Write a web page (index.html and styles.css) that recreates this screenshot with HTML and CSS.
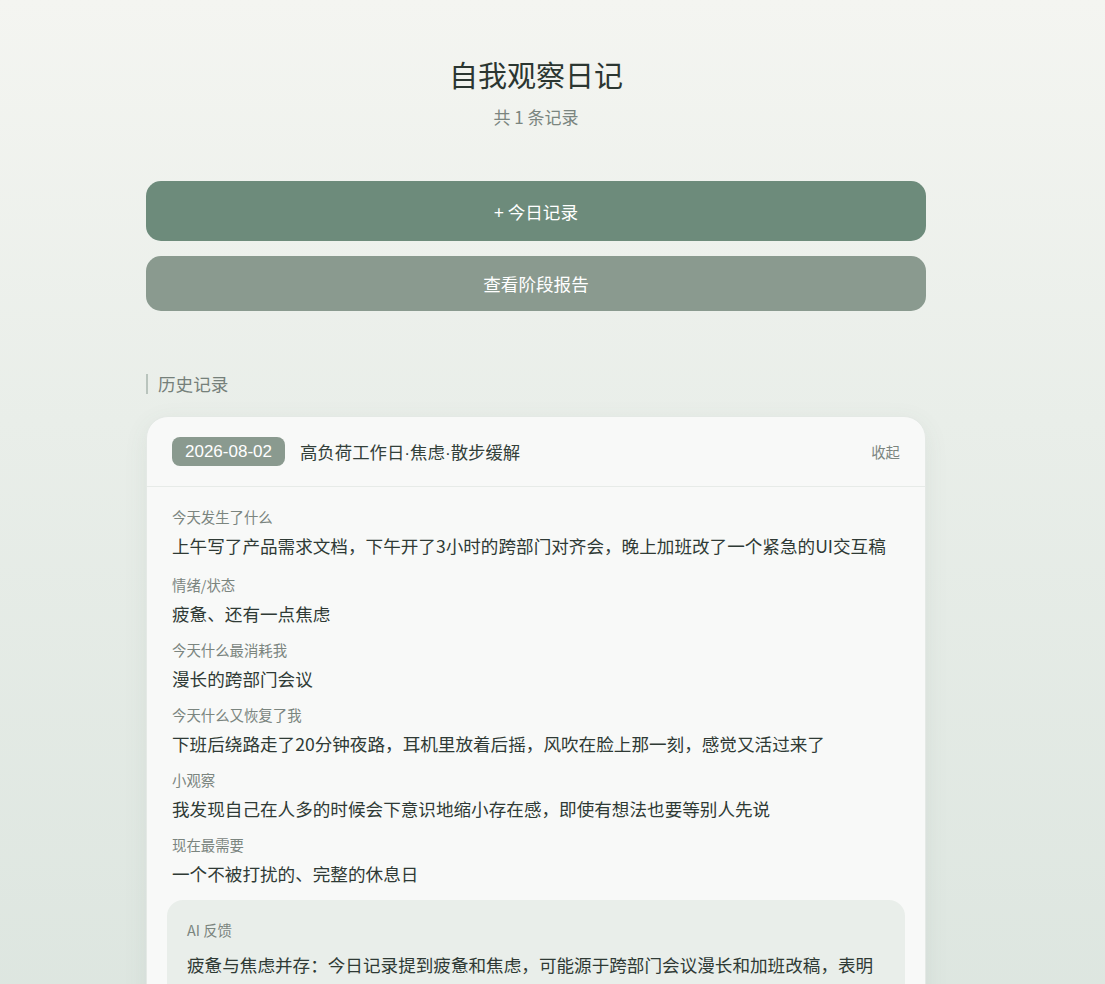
FILE: index.html
```html
<!DOCTYPE html>
<html lang="zh-CN">
<head>
<meta charset="utf-8">
<title>自我观察日记</title>
<link rel="stylesheet" href="styles.css">
</head>
<body>
<div class="page">
  <header class="top">
    <h1 class="title">自我观察日记</h1>
    <p class="count">共 1 条记录</p>
  </header>
  <div class="actions">
    <button class="btn btn-primary">+ 今日记录</button>
    <button class="btn btn-secondary">查看阶段报告</button>
  </div>
  <h2 class="section-title">历史记录</h2>
  <article class="card">
    <div class="card-head">
      <span class="date">2026-08-02</span>
      <span class="entry-title">高负荷工作日·焦虑·散步缓解</span>
      <span class="toggle">收起</span>
    </div>
    <div class="card-body">
      <div class="field field-first">
        <div class="label">今天发生了什么</div>
        <div class="value">上午写了产品需求文档，下午开了3小时的跨部门对齐会，晚上加班改了一个紧急的UI交互稿</div>
      </div>
      <div class="field">
        <div class="label">情绪/状态</div>
        <div class="value">疲惫、还有一点焦虑</div>
      </div>
      <div class="field">
        <div class="label">今天什么最消耗我</div>
        <div class="value">漫长的跨部门会议</div>
      </div>
      <div class="field">
        <div class="label">今天什么又恢复了我</div>
        <div class="value">下班后绕路走了20分钟夜路，耳机里放着后摇，风吹在脸上那一刻，感觉又活过来了</div>
      </div>
      <div class="field">
        <div class="label">小观察</div>
        <div class="value">我发现自己在人多的时候会下意识地缩小存在感，即使有想法也要等别人先说</div>
      </div>
      <div class="field">
        <div class="label">现在最需要</div>
        <div class="value">一个不被打扰的、完整的休息日</div>
      </div>
      <div class="ai">
        <div class="ai-label">AI 反馈</div>
        <div class="ai-text">疲惫与焦虑并存：今日记录提到疲惫和焦虑，可能源于跨部门会议漫长和加班改稿，表明身体与情绪都处在高负荷状态。散步与音乐带来的片刻放松，是值得保留的恢复方式。</div>
      </div>
    </div>
  </article>
</div>
</body>
</html>
```

FILE: styles.css
```css
html, body {
  margin: 0;
  padding: 0;
}
body {
  min-height: 100vh;
  background: linear-gradient(180deg, #f4f5f1 0%, #e9eee9 40%, #dce5df 100%);
  font-family: "Noto Sans CJK SC", "Noto Sans", "Liberation Sans", sans-serif;
  color: #2f3a35;
  padding-right: 33px;
  box-sizing: border-box;
}
.page {
  max-width: 780px;
  margin: 0 auto;
  padding-top: 54px;
}
.top {
  text-align: center;
}
.title {
  margin: 0;
  font-size: 29px;
  font-weight: 400;
  line-height: 40px;
  color: #2b3631;
}
.count {
  margin: 11px 0 0;
  font-size: 17px;
  line-height: 24px;
  color: #7b857f;
}
.actions {
  margin-top: 52px;
  display: flex;
  flex-direction: column;
  gap: 15px;
}
.btn {
  border: none;
  font-family: inherit;
  font-size: 17.6px;
  color: #ffffff;
  border-radius: 15px;
  width: 100%;
  cursor: pointer;
}
.btn-primary {
  height: 60px;
  background: #6d8b7b;
}
.btn-secondary {
  height: 55px;
  background: #8a9a8f;
}
.section-title {
  margin: 63px 0 0;
  font-size: 17.6px;
  font-weight: 400;
  line-height: 20px;
  color: #75807a;
  border-left: 2px solid #b9c4bd;
  padding-left: 10px;
}
.card {
  margin-top: 22px;
  background: #f8f9f8;
  border: 1px solid #e4e9e5;
  border-radius: 22px;
  box-shadow: 0 6px 24px rgba(80, 100, 90, 0.08);
  overflow: hidden;
}
.card-head {
  display: flex;
  align-items: center;
  height: 69px;
  padding: 0 25px;
  border-bottom: 1px solid #e7ebe8;
  gap: 15px;
}
.date {
  background: #8a9a8f;
  color: #ffffff;
  font-family: "Liberation Sans", "Noto Sans CJK SC", sans-serif;
  font-size: 17px;
  line-height: 29px;
  padding: 0 13px;
  border-radius: 8px;
}
.entry-title {
  flex: 1;
  font-family: "Liberation Sans", "Noto Sans CJK SC", sans-serif;
  font-size: 17.4px;
  color: #33403a;
}
.toggle {
  font-size: 14.4px;
  color: #7b857f;
}
.card-body {
  padding: 20px 20px 20px 25px;
}
.field {
  margin-bottom: 12px;
}
.field-first {
  margin-bottom: 15px;
}
.label {
  font-size: 14.4px;
  line-height: 20px;
  color: #7b857f;
}
.value {
  margin-top: 4px;
  font-size: 17.6px;
  line-height: 29px;
  color: #2f3a35;
}
.ai {
  margin: 6px 0 0 -5px;
  background: #e9eeea;
  border-radius: 16px;
  padding: 20px 20px 20px 20px;
}
.ai-label {
  font-size: 14.4px;
  line-height: 20px;
  color: #7b857f;
}
.ai-text {
  margin-top: 9px;
  font-size: 17.6px;
  line-height: 31px;
  color: #2f3a35;
}
```
